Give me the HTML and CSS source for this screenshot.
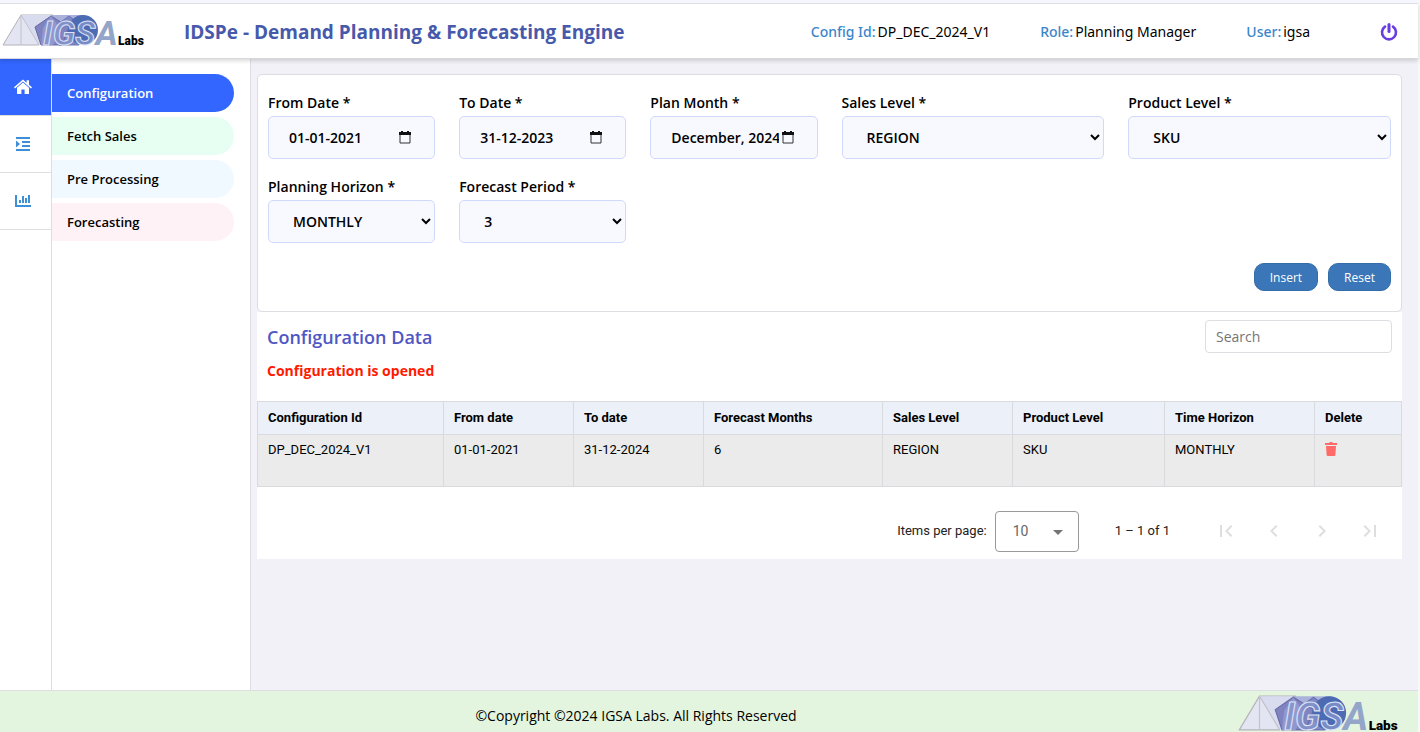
FILE: index.html
```html
<!DOCTYPE html>
<html lang="en">
<head>
    <meta charset="UTF-8">
    <meta name="viewport" content="width=device-width, initial-scale=1.0">
    <title>IDSPe - Demand Planning &amp; Forecasting Engine</title>
    <link rel="stylesheet" href="styles.css">
</head>
<body>
    <!-- Shared icons -->
    <svg class="icon-defs" aria-hidden="true">
        <symbol id="logo" viewBox="0 0 140 32">
            <path d="M0 31 L18 1 H50 L36 31 Z" fill="#e3e5f2" stroke="#b3b3b8" stroke-width="1"/>
            <path d="M18 1 H48 L33 14 L38 31 H36 Z" fill="#d9dcef"/>
            <path d="M18 1 V31 M18 1 L36 31" fill="none" stroke="#c2c2ca" stroke-width="1"/>
            <path d="M48 1 H82 V31 H38 Z" fill="#aab2dc"/>
            <path d="M50 14 L66 2 L82 14 L76 31 H56 Z" fill="#7d88c4" stroke="#6a74b0" stroke-width="1"/>
            <path d="M32 13 L48 2 L66 13 L59 31 H38 Z" fill="#7f84c0" stroke="#666ba6" stroke-width="1"/>
            <path d="M48 2 L58 16 L50 31 H38 L40 14 Z" fill="#9298cf"/>
            <circle cx="80" cy="16" r="15" fill="#4d6bb3"/>
            <text class="logo-name" x="40" y="31">IGS<tspan class="logo-name-end">A</tspan></text>
            <text class="logo-labs" x="115" y="31">Labs</text>
        </symbol>
        <symbol id="calendar" viewBox="0 0 12 13">
            <path d="M1 2 H11 V12 H1 Z" fill="none" stroke="#333" stroke-width="1"/>
            <path d="M0 1 H12 V4 H0 Z M2 0 H4 V2 H2 Z M8 0 H10 V2 H8 Z" fill="#111"/>
        </symbol>
    </svg>

    <header class="header">
        <svg class="logo" role="img" aria-label="IGSA Labs"><use href="#logo"/></svg>
        <h1>IDSPe - Demand Planning &amp; Forecasting Engine</h1>
        <div class="session">
            <p><span>Config Id:</span> DP_DEC_2024_V1</p>
            <p><span>Role:</span> Planning Manager</p>
            <p><span>User:</span> igsa</p>
        </div>
        <button type="button" class="power" aria-label="Log out">
            <svg viewBox="0 0 18 18" width="18" height="18" fill="none" stroke="#6a3de0" stroke-width="3" stroke-linecap="round">
                <path d="M9 1.5 V8.5"/>
                <path d="M5 3.6 A7 7 0 1 0 13 3.6" stroke-width="2.6"/>
            </svg>
        </button>
    </header>

    <div class="layout">
        <nav class="rail" aria-label="Sections">
            <a href="#" class="active" aria-label="Home">
                <svg viewBox="0 0 18 16" width="18" height="16" fill="#fff">
                    <path d="M9 3.6 L15 8.8 V14.4 Q15 15 14.4 15 H10.6 V10.5 H7.4 V15 H3.6 Q3 15 3 14.4 V8.8 Z"/>
                    <path d="M9 0.6 L12.6 3.7 V1.2 H15 V5.8 L18 8.3 L17 9.4 L9 2.6 L1 9.4 L0 8.3 Z"/>
                </svg>
            </a>
            <a href="#" aria-label="Indent">
                <svg viewBox="0 0 14 14" width="14" height="14" fill="#3d8fd8">
                    <path d="M0 0 H14 V2 H0 Z M6 4 H14 V6 H6 Z M6 8 H14 V10 H6 Z M0 12 H14 V14 H0 Z M0 3.5 L4 7 L0 10.5 Z"/>
                </svg>
            </a>
            <a href="#" aria-label="Reports">
                <svg viewBox="0 0 16 12" width="16" height="12" fill="#3d8fd8">
                    <path d="M0 0 H2 V10 H16 V12 H0 Z M4 5 H6 V8 H4 Z M7 1 H9 V8 H7 Z M10 3 H12 V8 H10 Z M13 0 H15 V8 H13 Z"/>
                </svg>
            </a>
        </nav>

        <nav class="menu" aria-label="Planning steps">
            <a href="#" class="active">Configuration</a>
            <a href="#" class="fetch">Fetch Sales</a>
            <a href="#" class="pre">Pre Processing</a>
            <a href="#" class="forecast">Forecasting</a>
        </nav>

        <main>
            <form class="config-form">
                <div class="fields">
                    <div class="field">
                        <label for="fromDate">From Date *</label>
                        <div class="date-box">
                            <input type="text" id="fromDate" value="01-01-2021">
                            <svg class="calendar"><use href="#calendar"/></svg>
                        </div>
                    </div>
                    <div class="field">
                        <label for="toDate">To Date *</label>
                        <div class="date-box">
                            <input type="text" id="toDate" value="31-12-2023">
                            <svg class="calendar"><use href="#calendar"/></svg>
                        </div>
                    </div>
                    <div class="field">
                        <label for="planMonth">Plan Month *</label>
                        <div class="date-box">
                            <input type="text" id="planMonth" value="December, 2024">
                            <svg class="calendar"><use href="#calendar"/></svg>
                        </div>
                    </div>
                    <div class="field wide">
                        <label for="salesLevel">Sales Level *</label>
                        <select id="salesLevel"><option>REGION</option></select>
                    </div>
                    <div class="field wide">
                        <label for="productLevel">Product Level *</label>
                        <select id="productLevel"><option>SKU</option></select>
                    </div>
                    <div class="field">
                        <label for="horizon">Planning Horizon *</label>
                        <select id="horizon"><option>MONTHLY</option></select>
                    </div>
                    <div class="field">
                        <label for="period">Forecast Period *</label>
                        <select id="period"><option>3</option></select>
                    </div>
                </div>
                <div class="actions">
                    <button type="button">Insert</button>
                    <button type="reset">Reset</button>
                </div>
            </form>

            <section class="data">
                <div class="data-head">
                    <h2>Configuration Data</h2>
                    <input type="search" placeholder="Search" aria-label="Search">
                </div>
                <p class="notice">Configuration is opened</p>

                <table>
                    <colgroup>
                        <col class="col-id">
                        <col class="col-date">
                        <col class="col-date">
                        <col class="col-months">
                        <col class="col-sales">
                        <col class="col-product">
                        <col class="col-time">
                        <col class="col-delete">
                    </colgroup>
                    <thead>
                        <tr>
                            <th>Configuration Id</th>
                            <th>From date</th>
                            <th>To date</th>
                            <th>Forecast Months</th>
                            <th>Sales Level</th>
                            <th>Product Level</th>
                            <th>Time Horizon</th>
                            <th>Delete</th>
                        </tr>
                    </thead>
                    <tbody>
                        <tr>
                            <td>DP_DEC_2024_V1</td>
                            <td>01-01-2021</td>
                            <td>31-12-2024</td>
                            <td>6</td>
                            <td>REGION</td>
                            <td>SKU</td>
                            <td>MONTHLY</td>
                            <td>
                                <button type="button" class="delete" aria-label="Delete">
                                    <svg viewBox="0 0 12 14" width="12" height="14" fill="#ff6b68">
                                        <path d="M0 1 H4 L5 0 H7 L8 1 H12 V3 H0 Z M1 4 H11 L10.4 12.8 Q10.3 14 9.2 14 H2.8 Q1.7 14 1.6 12.8 Z"/>
                                    </svg>
                                </button>
                            </td>
                        </tr>
                    </tbody>
                </table>

                <div class="paginator">
                    <label for="pageSize">Items per page:</label>
                    <div class="page-size">
                        <select id="pageSize"><option>10</option></select>
                        <svg viewBox="0 0 10 5" width="10" height="5" fill="#757575"><path d="M0 0 H10 L5 5 Z"/></svg>
                    </div>
                    <span class="range">1 – 1 of 1</span>
                    <button type="button" disabled aria-label="First page">
                        <svg viewBox="0 0 24 24"><path d="M18.41 16.59L13.82 12l4.59-4.59L17 6l-6 6 6 6zM6 6h2v12H6z"/></svg>
                    </button>
                    <button type="button" disabled aria-label="Previous page">
                        <svg viewBox="0 0 24 24"><path d="M15.41 7.41L14 6l-6 6 6 6 1.41-1.41L10.83 12z"/></svg>
                    </button>
                    <button type="button" disabled aria-label="Next page">
                        <svg viewBox="0 0 24 24"><path d="M10 6L8.59 7.41 13.17 12l-4.58 4.59L10 18l6-6z"/></svg>
                    </button>
                    <button type="button" disabled aria-label="Last page">
                        <svg viewBox="0 0 24 24"><path d="M5.59 7.41L10.18 12l-4.59 4.59L7 18l6-6-6-6zM16 6h2v12h-2z"/></svg>
                    </button>
                </div>
            </section>
        </main>
    </div>

    <footer class="footer">
        <p>©Copyright ©2024 IGSA Labs. All Rights Reserved</p>
        <svg class="logo" role="img" aria-label="IGSA Labs"><use href="#logo"/></svg>
    </footer>
</body>
</html>
```
FILE: styles.css
```css
* { margin: 0; padding: 0; box-sizing: border-box; }

body {
    font-family: "Open Sans", "Noto Sans", sans-serif;
    font-size: 14px;
    line-height: 20px;
    color: #000;
    background: #f8f8f9;
    min-height: 100vh;
    display: flex;
    flex-direction: column;
    border-top: 3px solid #f5f6fe;
    padding-right: 2px;
}

a { text-decoration: none; }

button {
    font-family: inherit;
    border: none;
    background: none;
    cursor: pointer;
}

svg { display: block; }

.icon-defs {
    position: absolute;
    width: 0;
    height: 0;
}

/* Header */
.header {
    display: flex;
    align-items: center;
    height: 56px;
    padding: 2px 20px 0 3px;
    background: #fff;
    border-top: 1px solid #dcdfe8;
    border-bottom: 1px solid #d8d8dc;
    box-shadow: 0 2px 4px rgba(0,0,0,0.15);
    position: relative;
    z-index: 1;
}

.logo {
    width: 140px;
    height: 32px;
    flex: none;
}

.logo,
#logo { overflow: visible; }

.header .logo { margin-bottom: 4px; }

.logo-name {
    font: italic bold 34px Roboto, sans-serif;
    fill: #8495cd;
    fill-opacity: 0.8;
    stroke: #dfe3f5;
    stroke-width: 1px;
}

.logo-name-end {
    fill: #93a5c9;
    fill-opacity: 1;
    stroke: none;
}

.logo-labs {
    font: 900 12px Roboto, sans-serif;
    fill: #000;
}

h1 {
    margin-left: 41px;
    font-size: 19px;
    font-weight: 700;
    color: #4759ab;
}

.session {
    display: flex;
    gap: 50px;
    margin-left: auto;
    font-family: "Noto Sans", "Open Sans", sans-serif;
}

.session p {
    display: flex;
    gap: 2px;
    white-space: nowrap;
}

.session span {
    color: #3b86cb;
    font-weight: 500;
}

.power {
    margin-left: 70px;
    height: 18px;
}

/* Side navigation */
.layout {
    flex: 1;
    display: flex;
}

.rail {
    width: 52px;
    flex: none;
    background: #fff;
    border-right: 1px solid #dddee2;
}

.rail a {
    display: flex;
    align-items: center;
    justify-content: center;
    height: 57px;
    padding-right: 5px;
    border-bottom: 1px solid #dddee2;
}

.rail a.active { background: #3366ff; }

.menu {
    width: 199px;
    flex: none;
    display: flex;
    flex-direction: column;
    gap: 5px;
    padding: 15px 16px 0 0;
    background: #fff;
    border-right: 1px solid #dddee2;
}

.menu a {
    padding: 9px 15px;
    border-radius: 0 19px 19px 0;
    font-size: 13px;
    font-weight: 600;
    color: #000;
}

.menu a.active {
    background: #3366ff;
    color: #fff;
}

.menu .fetch { background: #e6fff2; }
.menu .pre { background: #f0f9ff; }
.menu .forecast { background: #fff2f7; }

/* Content */
main {
    flex: 1;
    min-width: 0;
    padding: 15px 16px 20px 6px;
    background: #f1f1f7;
}

.config-form {
    background: #fff;
    border: 1px solid #dddee2;
    border-radius: 5px;
    padding: 18px 10px 20px;
}

.fields {
    display: grid;
    grid-template-columns: repeat(12, 1fr);
    gap: 18px 24px;
}

.field {
    grid-column: span 2;
    min-width: 0;
}

.field.wide { grid-column: span 3; }

.field label {
    display: block;
    margin-bottom: 3px;
    font-weight: 600;
}

.date-box { position: relative; }

.field input,
.field select {
    display: block;
    width: 100%;
    height: 43px;
    padding: 0 38px 0 20px;
    border: 1px solid #d0d9fa;
    border-radius: 5px;
    background: #f8f9ff;
    color: #000;
    font-family: inherit;
    font-size: 14px;
    font-weight: 600;
}

.field select { padding: 0 0 0 20px; }

.calendar {
    position: absolute;
    top: 15px;
    right: 24px;
    width: 12px;
    height: 13px;
}

.actions {
    display: flex;
    justify-content: flex-end;
    gap: 10px;
    margin-top: 20px;
}

.actions button {
    height: 28px;
    padding: 0 15px;
    border: 1px solid #336da9;
    border-radius: 10px;
    background: #3b76b8;
    color: #fff;
    font-size: 12px;
}

.data { background: #fff; }

.data-head {
    display: flex;
    justify-content: space-between;
    align-items: center;
    padding: 8px 10px 0;
}

h2 {
    font-size: 18px;
    font-weight: 600;
    color: #4f57c4;
}

.data-head input {
    width: 187px;
    height: 33px;
    padding: 0 10px;
    border: 1px solid #dddee2;
    border-radius: 4px;
    font-family: inherit;
    font-size: 14px;
}

.notice {
    padding: 8px 10px 20px;
    font-weight: 700;
    color: #ff1a00;
}

table {
    width: 100%;
    table-layout: fixed;
    border-collapse: collapse;
    font-family: Roboto, sans-serif;
    font-size: 13px;
}

.col-id { width: 186px; }
.col-date,
.col-sales { width: 130px; }
.col-months { width: 179px; }
.col-product { width: 152px; }
.col-time { width: 150px; }
.col-delete { width: 87px; }

th,
td {
    padding: 6px 10px;
    border: 1px solid #d9dadd;
    text-align: left;
    vertical-align: top;
}

th {
    background: #ecf0f8;
    font-weight: 700;
}

td {
    height: 52px;
    padding-top: 5px;
    background: #ebebeb;
}

.delete {
    display: block;
    padding-top: 2px;
}

/* Paginator */
.paginator {
    display: flex;
    align-items: center;
    justify-content: flex-end;
    padding: 20px 8px 4px 0;
    height: 72px;
    font-family: Roboto, sans-serif;
    font-size: 13px;
    color: #222;
}

.page-size {
    position: relative;
    margin: 0 36px 0 8px;
}

.page-size select {
    appearance: none;
    display: block;
    width: 84px;
    height: 41px;
    padding: 0 17px;
    border: 1px solid #999;
    border-radius: 4px;
    background: #fff;
    color: #666;
    font-family: inherit;
    font-size: 14px;
}

.page-size svg {
    position: absolute;
    top: 19px;
    right: 16px;
}

.range { margin-right: 32px; }

.paginator button {
    display: flex;
    justify-content: center;
    width: 48px;
}

.paginator button svg {
    width: 24px;
    height: 24px;
    fill: #dedede;
}

/* Footer */
.footer {
    display: flex;
    align-items: center;
    justify-content: flex-end;
    height: 42px;
    padding: 2px 20px 0 0;
    background: #e4f5df;
    border-top: 1px solid #dddee2;
}

.footer p {
    flex: 1;
    padding: 6px 0 0 34px;
    text-align: center;
}

.footer .logo {
    width: 160px;
    height: 36px;
}
```
